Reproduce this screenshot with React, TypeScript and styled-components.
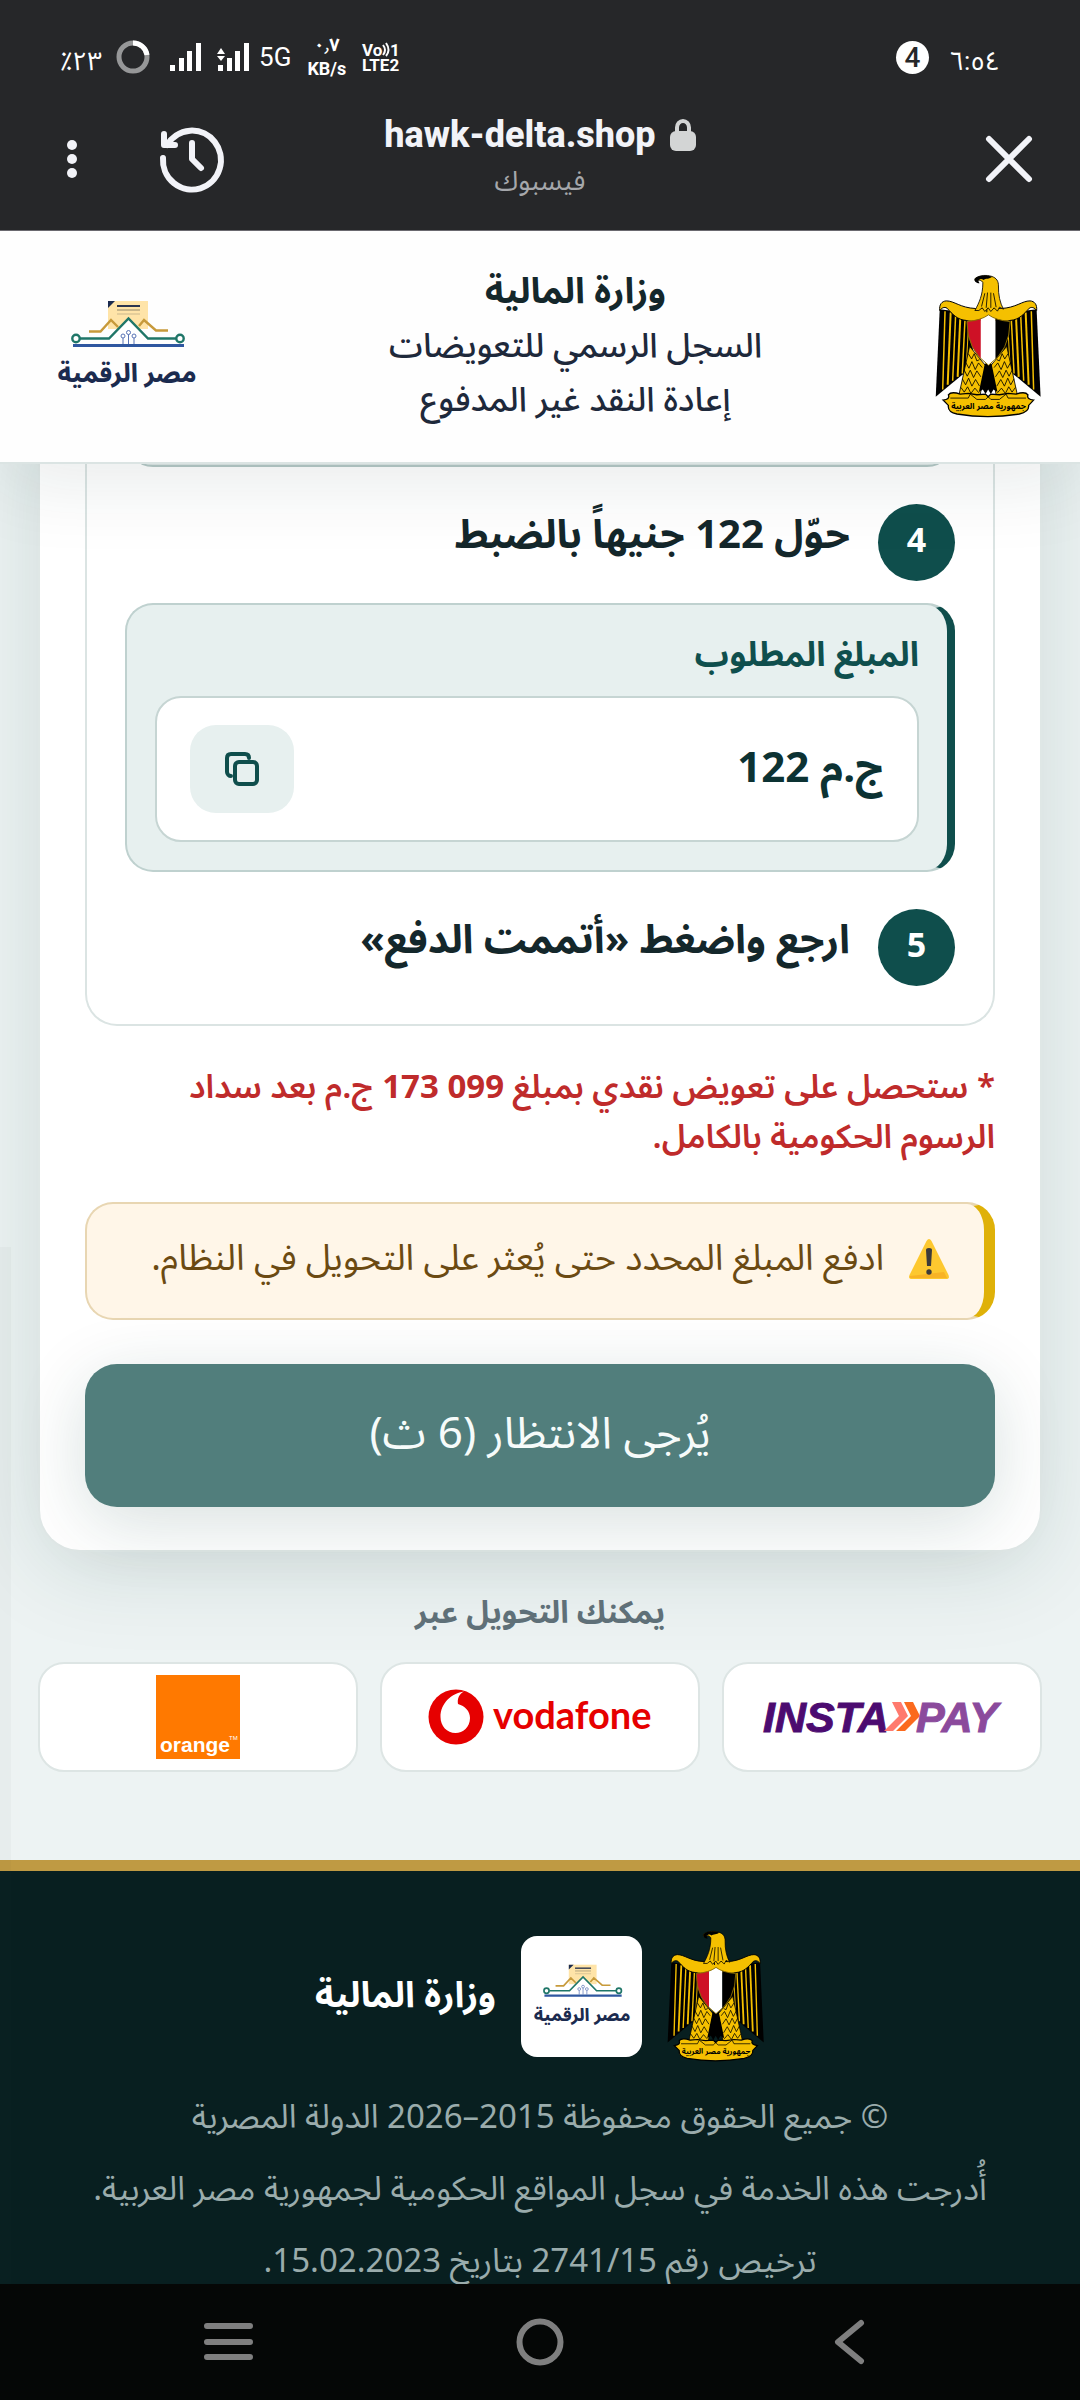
import React from "react";
import styled, { createGlobalStyle } from "styled-components";

const GlobalStyle = createGlobalStyle`
  *, *::before, *::after { box-sizing: border-box; }
  html, body { margin: 0; padding: 0; }
  body {
    background: #edf3f3;
    font-family: "Noto Sans Arabic", "Noto Sans", "DejaVu Sans", sans-serif;
    color: #14272b;
  }
  button { font: inherit; border: 0; padding: 0; background: none; color: inherit; }
  p, h1, h2 { margin: 0; }
  svg { overflow: visible; }
`;

const Shell = styled.div`
  display: flex;
  flex-direction: column;
  height: 100vh;
  overflow: hidden;
`;

/* ---------- phone and browser chrome ---------- */

const Chrome = styled.div`
  flex: none;
  background: #262729;
  color: #f2f3f8;
  border-bottom: 1px solid #6a696f;
  font-family: Roboto, "Noto Sans Arabic", "Noto Sans", sans-serif;
`;

const StatusBar = styled.div`
  direction: ltr;
  display: flex;
  align-items: center;
  justify-content: space-between;
  height: 114px;
  padding: 0 80px 0 60px;
  color: #fff;
`;

const StatusGroup = styled.div<{ $gap: number }>`
  display: flex;
  align-items: center;
  gap: ${(p) => p.$gap}px;
`;

const StatusText = styled.span`
  font-size: 26px;
  line-height: 32px;
`;

const StatusDigits = styled(StatusText)`
  padding-top: 8px;
`;

const StackedText = styled.span`
  display: flex;
  flex-direction: column;
  align-items: center;
  font-size: 18px;
  font-weight: 700;
  line-height: 24px;
`;

const CountBadge = styled.span`
  display: grid;
  place-items: center;
  width: 33px;
  height: 33px;
  border-radius: 50%;
  background: #fff;
  color: #262729;
  font: 500 28px/33px Roboto, sans-serif;
`;

const BrowserBar = styled.div`
  direction: ltr;
  display: grid;
  grid-template-columns: 1fr auto 1fr;
  align-items: center;
  height: 116px;
  padding: 0 44px 26px;
`;

const BarActions = styled.div<{ $end?: boolean }>`
  display: flex;
  align-items: center;
  gap: 58px;
  justify-content: ${(p) => (p.$end ? "flex-end" : "flex-start")};
`;

const IconButton = styled.button`
  display: grid;
  place-items: center;
  line-height: 0;
`;

const Address = styled.div`
  display: flex;
  flex-direction: column;
  align-items: center;
  gap: 4px;
`;

const Host = styled.div`
  display: flex;
  align-items: center;
  gap: 14px;
  font-size: 36px;
  font-weight: 800;
  line-height: 40px;
`;

const Via = styled.div`
  font-size: 27px;
  line-height: 44px;
  color: #a5a7ab;
`;

/* ---------- page ---------- */

const Page = styled.div`
  direction: rtl;
  position: relative;
  flex: 1;
  min-height: 0;
  overflow: hidden;
  display: flex;
  flex-direction: column;
`;

const ScrollThumb = styled.div`
  position: absolute;
  left: 0;
  top: 1016px;
  bottom: 0;
  width: 11px;
  background: rgba(60, 70, 70, 0.03);
`;

const Header = styled.header`
  position: relative;
  z-index: 2;
  flex: none;
  display: flex;
  align-items: center;
  justify-content: space-between;
  height: 233px;
  padding: 0 38px 2px;
  background: #fefefe;
  border-bottom: 2px solid #dbe4e3;
  box-shadow: 0 16px 80px rgba(15, 50, 48, 0.1);
`;

const HeaderLogo = styled.span`
  display: grid;
  place-items: center;
  width: 178px;
`;

const HeaderText = styled.div`
  text-align: center;
  font-size: 34px;
  font-weight: 500;
  line-height: 54px;
  color: #1e293b;
`;

const HeaderTitle = styled.h1`
  font-size: 36px;
  font-weight: 700;
  line-height: 54px;
  color: #14272b;
`;

const Content = styled.main`
  flex: none;
  padding: 0 38px;
`;

const Card = styled.section`
  padding: 0 45px 43px;
  background: #fff;
  border: 2px solid #dfe7e6;
  border-top: 0;
  border-radius: 0 0 42px 42px;
  box-shadow: 0 16px 90px rgba(15, 60, 56, 0.13);
`;

const Steps = styled.div`
  padding: 0 38px 38px;
  border: 2px solid #dbe4e3;
  border-top: 0;
  border-radius: 0 0 32px 32px;
`;

const Panel = styled.div`
  padding: 28px;
  background: #e7f0ef;
  border: 2px solid #bfd1cf;
  border-right: 8px solid #0f4e4c;
  border-radius: 28px;
`;

const PanelTail = styled.div`
  height: 60px;
  margin-top: -57px;
  background: #dbe5e4;
  border: 2px solid #b5c8c6;
  border-radius: 28px;
`;

const Step = styled.div<{ $after: number }>`
  display: flex;
  gap: 28px;
  margin: 37px 0 ${(p) => p.$after}px;
`;

const StepNumber = styled.span`
  display: grid;
  place-items: center;
  flex: none;
  width: 77px;
  height: 77px;
  padding-bottom: 4px;
  border-radius: 50%;
  background: #0f4e4c;
  color: #fff;
  font-size: 34px;
  font-weight: 700;
  line-height: 40px;
`;

const StepText = styled.h2`
  font-size: 40px;
  font-weight: 700;
  line-height: 63px;
`;

const FieldLabel = styled.div`
  font-size: 34px;
  font-weight: 700;
  line-height: 44px;
  color: #0f4f4d;
`;

const Field = styled.div`
  display: flex;
  align-items: center;
  justify-content: space-between;
  height: 146px;
  margin-top: 19px;
  padding: 0 33px;
  background: #fff;
  border: 2px solid #c6d5d3;
  border-radius: 26px;
`;

const Amount = styled.output`
  font-size: 42px;
  font-weight: 700;
  line-height: 60px;
  color: #0c3233;
`;

const CopyButton = styled.button`
  display: grid;
  place-items: center;
  width: 104px;
  height: 88px;
  border-radius: 26px;
  background: #e7f0ef;
  color: #0f4e4c;
`;

const Note = styled.p`
  margin-top: 37px;
  padding-left: 12px;
  font-size: 33px;
  font-weight: 560;
  line-height: 50px;
  color: #bf2b2b;

  strong { font-weight: 700; }
`;

const Warning = styled.div`
  display: flex;
  align-items: center;
  gap: 24px;
  height: 118px;
  margin: 39px 0 44px;
  padding: 0 34px 4px 20px;
  background: #fff6e8;
  border: 2px solid #e8d6b2;
  border-right: 11px solid #dfb108;
  border-radius: 28px;
  font-size: 36px;
  line-height: 54px;
  color: #6b4a12;
  white-space: nowrap;
`;

const WaitButton = styled.button`
  display: block;
  width: 100%;
  height: 143px;
  padding-bottom: 4px;
  border-radius: 32px;
  background: #517e7c;
  color: #f6fbfa;
  font-size: 44px;
  line-height: 60px;
  box-shadow: 0 16px 70px rgba(15, 60, 56, 0.16);
`;

const MethodsTitle = styled.h2`
  margin-top: 37px;
  text-align: center;
  font-size: 31px;
  font-weight: 700;
  line-height: 48px;
  color: #5f7078;
`;

const Methods = styled.div`
  display: grid;
  grid-template-columns: repeat(3, 1fr);
  gap: 22px;
  margin: 25px 0 88px;
`;

const Method = styled.div`
  display: grid;
  place-items: center;
  height: 110px;
  background: #fff;
  border: 2px solid #dde5e4;
  border-radius: 26px;
`;

const Footer = styled.footer`
  flex: none;
  padding: 59px 39px 40px;
  border-top: 11px solid #bf9a43;
  background: #081f20;
  color: #9aacac;
  text-align: center;
  font-size: 33px;
  line-height: 52px;
`;

const FooterBrand = styled.div`
  display: flex;
  align-items: center;
  justify-content: center;
  gap: 25px;
  margin-bottom: 30px;
  color: #fff;
  font-size: 36px;
  font-weight: 700;
`;

const LogoTile = styled.span`
  display: grid;
  place-items: center;
  width: 121px;
  height: 121px;
  border-radius: 16px;
  background: #fff;
`;

const FooterLine = styled.p`
  margin-bottom: 20px;
`;

const NavBar = styled.nav`
  direction: ltr;
  flex: none;
  display: flex;
  align-items: center;
  justify-content: space-between;
  height: 116px;
  padding: 0 204px;
  background: #050706;
  color: #7f7f7f;
`;

/* ---------- drawings ---------- */

const EagleSide = () => (
  <g>
    <path d="M60 146L48 410L130 342L165 290L142 178L90 150Z" fill="#000" />
    <g stroke="#f5c000" strokeWidth="4.5" fill="none">
      <path d="M76 152L69 388" />
      <path d="M93 156L84 374" strokeWidth="6" />
      <path d="M108 162L99 362" />
      <path d="M122 170L114 350" strokeWidth="6" />
      <path d="M136 180L128 340" />
      <path d="M146 210L140 318" strokeWidth="3" />
    </g>
    <path
      d="M60 150C58 132 66 122 80 121C104 121 122 142 168 144L210 140V165C190 182 160 186 140 180C112 178 98 160 82 143C74 138 66 142 60 150Z"
      fill="#f5c000"
      stroke="#000"
      strokeWidth="3"
    />
    <path d="M150 258L118 404H182L198 316Z" fill="#f5c000" stroke="#000" strokeWidth="2.5" />
    <path
      d="M146 280L156 296L164 280L172 302L180 298M138 306L148 324L157 304L167 328L177 308L188 322M134 330L143 348L152 330L162 352L172 332L184 350M128 356L138 374L147 354L157 378L168 358L180 378M124 382L134 396L144 380L154 400L166 384L178 398"
      fill="none"
      stroke="#000"
      strokeWidth="2.5"
    />
  </g>
);

const Eagle = ({ width, height }: { width: number; height: number }) => (
  <svg width={width} height={height} viewBox="46 40 322 434" role="img" aria-label="شعار النسر">
    <EagleSide />
    <g transform="translate(412 0) scale(-1 1)">
      <EagleSide />
    </g>
    <path d="M166 164C180 152 232 152 246 164L240 180H172Z" fill="#f5c000" />
    <path d="M196 310H216L234 396L222 388L214 402L206 388L198 402L190 388L178 396Z" fill="#000" />
    <path
      d="M190 66C186 58 178 56 170 62C164 62 164 52 172 50C184 44 200 42 216 47C232 52 237 62 237 76C236 102 242 128 252 146L240 140L234 152L224 142L214 153L206 142L196 153L188 142L178 150L166 150C178 128 190 104 190 66Z"
      fill="#f5c000"
      stroke="#000"
      strokeWidth="2.5"
    />
    <path d="M166 54C176 44 196 41 218 48C210 56 198 52 192 58C186 53 180 55 176 60L180 68C170 68 164 62 166 54Z" fill="#000" />
    <path d="M196 98L186 138M204 96L200 142M214 96V142M222 98L230 140" stroke="#000" strokeWidth="2.5" fill="none" />
    <clipPath id="shield">
      <path d="M142 183Q184 180 207 163Q230 180 272 183Q272 270 207 315Q142 270 142 183Z" />
    </clipPath>
    <g clipPath="url(#shield)">
      <rect x="140" y="160" width="44" height="160" fill="#ce1126" />
      <rect x="184" y="160" width="44" height="160" fill="#fff" />
      <rect x="228" y="160" width="46" height="160" fill="#000" />
    </g>
    <path
      d="M142 183Q184 180 207 163Q230 180 272 183Q272 270 207 315Q142 270 142 183Z"
      fill="none"
      stroke="#8a6d00"
      strokeWidth="3"
    />
    <path
      d="M70 420C84 418 90 414 86 404C92 396 110 398 122 402L146 400L172 404L198 402L206 410L214 402L240 404L266 400L290 402C302 398 320 396 326 404C322 414 330 418 343 420L328 436C330 452 318 458 300 462C240 472 170 472 112 462C94 458 84 452 86 436Z"
      fill="#f5c000"
      stroke="#000"
      strokeWidth="4"
    />
    <path d="M92 414H146L152 402L172 418H198L206 410L214 418H240L260 402L266 414H320" fill="none" stroke="#000" strokeWidth="2.5" />
    <text x="207" y="447" textAnchor="middle" fontSize="25" fontWeight="700" direction="rtl" fill="#000">
      جمهورية مصر العربية
    </text>
  </svg>
);

const DigitalEgypt = ({ width, height }: { width: number; height: number }) => (
  <svg width={width} height={height} viewBox="0 0 140 92" role="img" aria-label="مصر الرقمية">
    <rect x="51" y="1" width="40" height="28" fill="#ffe4a8" />
    <path d="M51 1h7l-7 7z" fill="#1b2b4f" />
    <path d="M60 6h23" stroke="#2b3550" strokeWidth="2" />
    <path d="M60 10h23" stroke="#b7a780" strokeWidth="1.5" />
    <path d="M60 14h23" stroke="#dcc796" strokeWidth="1.5" />
    <path d="M71 19L52 39H91Z" fill="#fff" />
    <g fill="none" strokeWidth="2.4">
      <path d="M32 31.5H43.5L54 20L61 27M82 26L87 20L99 30.5H111" stroke="#c79a3b" />
      <path d="M23 38.5H52L71.5 18.5L91 38.5H119" stroke="#1f7668" />
      <circle cx="19" cy="38.5" r="3.7" stroke="#1f7668" fill="#fff" />
      <circle cx="123" cy="38.5" r="3.7" stroke="#1f7668" fill="#fff" />
    </g>
    <path d="M16 45.5H127" stroke="#2f57a0" strokeWidth="3" />
    <g stroke="#5873b5" strokeWidth="1" fill="#fff">
      <path d="M66 38V44M71.5 34V44M77 38V44" />
      <circle cx="66" cy="36" r="2" />
      <circle cx="71.5" cy="32.5" r="2" />
      <circle cx="77" cy="36" r="2" />
    </g>
    <text x="70" y="82" textAnchor="middle" direction="rtl" fontSize="25" fontWeight="800" fill="#1b2b4f">
      مصر الرقمية
    </text>
  </svg>
);

const Signal = () => (
  <svg width="31" height="28" viewBox="0 0 31 28" fill="#fff" aria-hidden="true">
    <rect x="0" y="22" width="5" height="6" />
    <rect x="9" y="15" width="5" height="13" />
    <rect x="17" y="8" width="5" height="20" />
    <rect x="26" y="0" width="5" height="28" />
  </svg>
);

const SignalData = () => (
  <svg width="32" height="28" viewBox="0 0 32 28" fill="#fff" aria-hidden="true">
    <path d="M0 11L4 5L8 11ZM0 13H8L4 18Z" />
    <rect x="1" y="22" width="5" height="6" />
    <rect x="10" y="15" width="5" height="13" />
    <rect x="18" y="8" width="5" height="20" />
    <rect x="27" y="0" width="5" height="28" />
  </svg>
);

const Battery = () => (
  <svg width="34" height="34" viewBox="0 0 34 34" fill="none" strokeWidth="5" aria-hidden="true">
    <circle cx="17" cy="17" r="14" stroke="#969798" />
    <path d="M17 3A14 14 0 0 1 31 15" stroke="#fff" />
  </svg>
);

const VoLte = () => (
  <svg width="38" height="30" viewBox="0 0 38 30" fill="#fff" fontFamily="Roboto, sans-serif" fontWeight="700" aria-hidden="true">
    <text x="0" y="14" fontSize="17">Vo</text>
    <path d="M21 3Q25 8 21 13M24 1Q29 8 24 14" stroke="#fff" strokeWidth="2" fill="none" />
    <text x="28" y="14" fontSize="17">1</text>
    <text x="0" y="29" fontSize="17">LTE2</text>
  </svg>
);

const Dots = () => (
  <svg width="56" height="64" viewBox="0 0 56 64" fill="#f2f3f8" aria-hidden="true">
    <circle cx="28" cy="18" r="5" />
    <circle cx="28" cy="32" r="5" />
    <circle cx="28" cy="46" r="5" />
  </svg>
);

const History = () => (
  <svg width="68" height="68" viewBox="0 0 68 68" fill="none" stroke="#f2f3f8" strokeWidth="6" strokeLinecap="round" strokeLinejoin="round" aria-hidden="true">
    <path d="M5 33A29 29.5 0 1 0 9 20" />
    <path d="M6 9V20H17" />
    <path d="M34 18V34L43 43" />
  </svg>
);

const Lock = () => (
  <svg width="26" height="32" viewBox="0 0 26 32" aria-hidden="true">
    <path d="M7 15V8.5a6 6.5 0 0 1 12 0V15" fill="none" stroke="#d3d5d5" strokeWidth="4" />
    <rect x="0" y="12" width="26" height="20" rx="6" fill="#d3d5d5" />
  </svg>
);

const Close = () => (
  <svg width="54" height="54" viewBox="0 0 54 54" stroke="#f2f3f8" strokeWidth="6" strokeLinecap="round" aria-hidden="true">
    <path d="M7 7L47 47M47 7L7 47" />
  </svg>
);

const Copy = () => (
  <svg width="36" height="36" viewBox="0 0 36 36" fill="none" stroke="currentColor" strokeWidth="4" strokeLinecap="round" strokeLinejoin="round" aria-hidden="true">
    <rect x="11" y="11" width="22" height="22" rx="4" />
    <path d="M7 25C5 25 3 23 3 21V7Q3 3 7 3H21C24 3 25 5 25 7" />
  </svg>
);

const Alert = () => (
  <svg width="42" height="42" viewBox="0 0 42 42" aria-hidden="true">
    <path d="M18.5 3Q21 -1 23.5 3L40.5 37Q42 41 38 41H4Q0 41 1.5 37Z" fill="#fdc82f" />
    <path d="M36 34L39 40H4Q1 40 2 38Z" fill="#f8b325" />
    <path d="M18 12Q18 10 21 10T24 12L23 28H19Z" fill="#3d3b3a" />
    <circle cx="21" cy="34" r="2.7" fill="#3d3b3a" />
  </svg>
);

const InstaPay = () => (
  <svg width="240" height="34" viewBox="0 0 240 34" role="img" aria-label="InstaPay" fontFamily="'Liberation Sans', sans-serif" fontWeight="700" fontStyle="italic" fontSize="43">
    <text x="1" y="32" fill="#4c0b70" stroke="#4c0b70" direction="ltr">INSTA</text>
    <path d="M130 2h9l7 14l-15 15h-9l15 -15z" fill="#ff7a6e" />
    <path d="M142 2h9l7 14l-15 15h-9l15 -15z" fill="#fb6a1e" />
    <text x="154" y="32" fill="#8b4a9c" stroke="#8b4a9c" direction="ltr">PAY</text>
  </svg>
);

const Vodafone = () => (
  <svg width="224" height="56" viewBox="0 0 224 56" role="img" aria-label="Vodafone">
    <circle cx="28" cy="28" r="27.5" fill="#e60000" />
    <path d="M12.5 28C12.5 14 24 4 36 2.5C31 5 29 10 30 15C37 17 42 22 42 29C42 38 35 44 27.5 44C19 44 12.5 37 12.5 28Z" fill="#fff" />
    <text x="65" y="40" fontSize="38" fontWeight="700" fill="#e60000" fontFamily="Lato, sans-serif" direction="ltr">vodafone</text>
  </svg>
);

const Orange = () => (
  <svg width="84" height="84" viewBox="0 0 84 84" role="img" aria-label="Orange" fontFamily="'Liberation Sans', sans-serif">
    <rect width="84" height="84" fill="#ff7900" />
    <text x="4" y="77" fontSize="21" fontWeight="700" fill="#fff" direction="ltr">orange</text>
    <text x="73" y="65" fontSize="6" fill="#fff" direction="ltr">TM</text>
  </svg>
);

const NavMenu = () => (
  <svg width="50" height="48" viewBox="0 0 50 48" stroke="currentColor" strokeWidth="6" strokeLinecap="round" aria-hidden="true">
    <path d="M3 8H46M3 24H46M3 39H46" />
  </svg>
);

const NavHome = () => (
  <svg width="48" height="48" viewBox="0 0 48 48" fill="none" stroke="currentColor" strokeWidth="6" aria-hidden="true">
    <circle cx="24" cy="24" r="20.5" />
  </svg>
);

const NavBack = () => (
  <svg width="50" height="48" viewBox="0 0 50 48" fill="none" stroke="currentColor" strokeWidth="6" strokeLinecap="round" strokeLinejoin="round" aria-hidden="true">
    <path d="M35 5L12 24L35 43" />
  </svg>
);

/* ---------- app ---------- */

export default function App() {
  return (
    <Shell lang="ar">
      <GlobalStyle />
      <Chrome>
        <StatusBar>
          <StatusGroup $gap={16}>
            <StatusGroup $gap={20}>
              <StatusGroup $gap={14}>
                <StatusDigits>٪٢٣</StatusDigits>
                <Battery />
              </StatusGroup>
              <Signal />
            </StatusGroup>
            <StatusGroup $gap={10}>
              <SignalData />
              <StatusText>5G</StatusText>
            </StatusGroup>
            <StackedText>
              <span>٠٫٧</span>
              <span>KB/s</span>
            </StackedText>
            <VoLte />
          </StatusGroup>
          <StatusGroup $gap={20}>
            <CountBadge>4</CountBadge>
            <StatusDigits>٦:٥٤</StatusDigits>
          </StatusGroup>
        </StatusBar>
        <BrowserBar>
          <BarActions>
            <IconButton type="button" aria-label="المزيد"><Dots /></IconButton>
            <IconButton type="button" aria-label="السجل"><History /></IconButton>
          </BarActions>
          <Address>
            <Host>hawk-delta.shop <Lock /></Host>
            <Via>فيسبوك</Via>
          </Address>
          <BarActions $end>
            <IconButton type="button" aria-label="إغلاق"><Close /></IconButton>
          </BarActions>
        </BrowserBar>
      </Chrome>

      <Page>
        <Header>
          <Eagle width={107} height={144} />
          <HeaderText>
            <HeaderTitle>وزارة المالية</HeaderTitle>
            <p>السجل الرسمي للتعويضات</p>
            <p>إعادة النقد غير المدفوع</p>
          </HeaderText>
          <HeaderLogo><DigitalEgypt width={140} height={92} /></HeaderLogo>
        </Header>

        <Content>
          <Card>
            <Steps>
              <PanelTail />
              <Step $after={22}>
                <StepNumber>4</StepNumber>
                <StepText>حوّل 122 جنيهاً بالضبط</StepText>
              </Step>
              <Panel>
                <FieldLabel id="amount-label">المبلغ المطلوب</FieldLabel>
                <Field>
                  <Amount aria-labelledby="amount-label">ج.م 122</Amount>
                  <CopyButton type="button" aria-label="نسخ"><Copy /></CopyButton>
                </Field>
              </Panel>
              <Step $after={0}>
                <StepNumber>5</StepNumber>
                <StepText>ارجع واضغط «أتممت الدفع»</StepText>
              </Step>
            </Steps>
            <Note>
              * ستحصل على تعويض نقدي بمبلغ <strong>173{"\u00a0"}099</strong> ج.م بعد سداد الرسوم الحكومية بالكامل.
            </Note>
            <Warning>
              <Alert />
              <span>ادفع المبلغ المحدد حتى يُعثر على التحويل في النظام.</span>
            </Warning>
            <WaitButton type="button" disabled>يُرجى الانتظار (6 ث)</WaitButton>
          </Card>

          <MethodsTitle>يمكنك التحويل عبر</MethodsTitle>
          <Methods>
            <Method><InstaPay /></Method>
            <Method><Vodafone /></Method>
            <Method><Orange /></Method>
          </Methods>
        </Content>

        <Footer>
          <FooterBrand>
            <Eagle width={98} height={132} />
            <LogoTile><DigitalEgypt width={98} height={64} /></LogoTile>
            <span>وزارة المالية</span>
          </FooterBrand>
          <FooterLine>© جميع الحقوق محفوظة 2015–2026 الدولة المصرية</FooterLine>
          <FooterLine>أُدرجت هذه الخدمة في سجل المواقع الحكومية لجمهورية مصر العربية.</FooterLine>
          <FooterLine>ترخيص رقم 2741/15 بتاريخ 15.02.2023.</FooterLine>
        </Footer>
        <ScrollThumb />
      </Page>

      <NavBar>
        <IconButton type="button" aria-label="التطبيقات الأخيرة"><NavMenu /></IconButton>
        <IconButton type="button" aria-label="الرئيسية"><NavHome /></IconButton>
        <IconButton type="button" aria-label="رجوع"><NavBack /></IconButton>
      </NavBar>
    </Shell>
  );
}
